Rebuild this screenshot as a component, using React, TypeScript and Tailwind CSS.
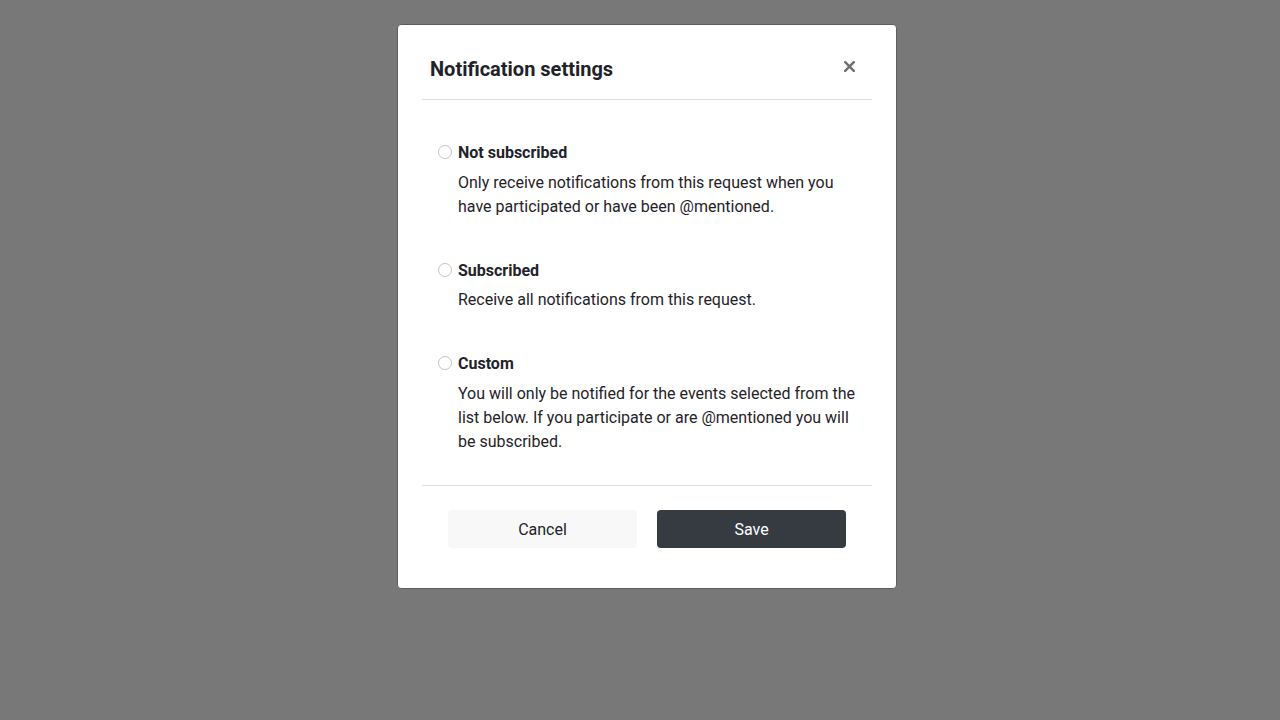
import { useState } from 'react';

type Option = {
  id: string;
  label: string;
  description: string;
};

const OPTIONS: Option[] = [
  {
    id: 'not-subscribed',
    label: 'Not subscribed',
    description:
      'Only receive notifications from this request when you have participated or have been @mentioned.',
  },
  {
    id: 'subscribed',
    label: 'Subscribed',
    description: 'Receive all notifications from this request.',
  },
  {
    id: 'custom',
    label: 'Custom',
    description:
      'You will only be notified for the events selected from the list below. If you participate or are @mentioned you will be subscribed.',
  },
];

export default function App() {
  const [selected, setSelected] = useState<string | null>(null);

  return (
    <div
      className="min-h-screen w-full bg-[#787878] pt-[24px] pl-[397px] text-[#1f2329]"
      style={{ fontFamily: 'Roboto, "Liberation Sans", Arial, sans-serif' }}
    >
      <div className="w-[500px] rounded-[4px] border border-[#5e5e5e] bg-white px-6 pb-[40px]">
        {/* Header */}
        <div className="flex items-center justify-between border-b border-[#dedede] pt-[30px] pb-4 pl-2 pr-[17px]">
          <h2 className="text-[20px] leading-7 font-bold">Notification settings</h2>
          <button type="button" aria-label="Close" className="-mt-[5px] text-[#6f6f6f]">
            <svg width="11" height="11" viewBox="0 0 11 11" fill="none">
              <path d="M1.2 1.2 L9.8 9.8 M9.8 1.2 L1.2 9.8" stroke="currentColor" strokeWidth="2.4" strokeLinecap="round" />
            </svg>
          </button>
        </div>

        {/* Body */}
        <div className="flex flex-col gap-10 border-b border-[#dedede] pt-[41px] pb-[31px] pl-4 pr-4">
          {OPTIONS.map((opt, i) => (
            <label key={opt.id} className="flex cursor-pointer flex-col">
              <div className="flex items-center gap-[6px]">
                <input
                  type="radio"
                  name="notification"
                  checked={selected === opt.id}
                  onChange={() => setSelected(opt.id)}
                  className="h-[14px] w-[14px] -translate-y-px appearance-none rounded-full border border-[#c4c4c4] bg-white checked:border-[4px] checked:border-[#373a40]"
                />
                <span className="text-[16px] leading-6 font-bold">{opt.label}</span>
              </div>
              <p className={i === 1 ? 'mt-[5px] pl-5 text-[16px] leading-6' : 'mt-[6px] pl-5 text-[16px] leading-6'}>
                {opt.description}
              </p>
            </label>
          ))}
        </div>

        {/* Footer */}
        <div className="flex gap-5 px-[26px] pt-6">
          <button
            type="button"
            className="h-[38px] flex-1 rounded-[4px] bg-[#f8f8f8] pt-px text-[16px] text-[#1f2329]"
          >
            Cancel
          </button>
          <button
            type="button"
            className="h-[38px] flex-1 rounded-[4px] bg-[#363a41] pt-px text-[16px] text-white"
          >
            Save
          </button>
        </div>
      </div>
    </div>
  );
}
